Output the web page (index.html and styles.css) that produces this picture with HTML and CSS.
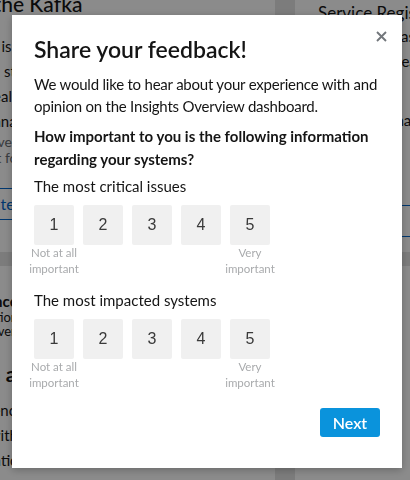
FILE: index.html
```html
<!DOCTYPE html>
<html lang="en">
<head>
<meta charset="utf-8">
<title>Share your feedback</title>
<link rel="stylesheet" href="styles.css">
</head>
<body>
<div class="page">
  <div class="card">
    <div class="ctitle">Try the Kafka</div>
    <div class="cline">Kafka is the fastest way to start</div>
    <div class="cline">Go on streaming data in</div>
    <div class="cline">Get real time for your apps</div>
    <div class="cline">All managed by Red Hat</div>
    <div class="cmuted">Observer ready</div>
    <div class="cmuted">Start it for free today</div>
    <div class="cbtn">Create instance</div>
  </div>
  <div class="card">
    <div class="rtitle">Service Registry</div>
    <div class="cline r">Share schemas with users</div>
    <div class="cline r">and service teams</div>
    <div class="cline r gapr">Reuse schemas</div>
    <div class="cline r">Shared info</div>
    <div class="cline r">Use data</div>
    <div class="cbtn">Learn more</div>
  </div>
  <div class="card c2">
    <div class="bold">Advanced Insights</div>
    <div class="small">Operations and</div>
    <div class="small">Data overview</div>
    <div class="ctitle2">Plan ahead</div>
    <div class="cline">Efficiency</div>
    <div class="cline">Box with</div>
    <div class="cline">Operations</div>
  </div>
  <div class="card c2"></div>
</div>

<div class="backdrop"></div>

<div class="modal" role="dialog" aria-labelledby="mtitle">
  <button class="close" aria-label="Close">
    <svg width="11" height="11" viewBox="0 0 11 11"><path d="M1 1 L10 10 M10 1 L1 10" stroke="#72767b" stroke-width="1.9" fill="none"/></svg>
  </button>
  <h1 class="mtitle" id="mtitle">Share your feedback!</h1>
  <p class="intro">We would like to hear about your experience with and opinion on the Insights Overview dashboard.</p>
  <p class="question">How important to you is the following information regarding your systems?</p>

  <div class="group">
    <div class="glabel">The most critical issues</div>
    <div class="scale">
      <div class="item"><div class="box">1</div><div class="hint">Not at all important</div></div>
      <div class="item"><div class="box">2</div></div>
      <div class="item"><div class="box">3</div></div>
      <div class="item"><div class="box">4</div></div>
      <div class="item"><div class="box">5</div><div class="hint">Very important</div></div>
    </div>
  </div>

  <div class="group second">
    <div class="glabel">The most impacted systems</div>
    <div class="scale">
      <div class="item"><div class="box">1</div><div class="hint">Not at all important</div></div>
      <div class="item"><div class="box">2</div></div>
      <div class="item"><div class="box">3</div></div>
      <div class="item"><div class="box">4</div></div>
      <div class="item"><div class="box">5</div><div class="hint">Very important</div></div>
    </div>
  </div>

  <div class="footer">
    <button class="next">Next</button>
  </div>
</div>
</body>
</html>
```

FILE: styles.css
```css
html, body {
  margin: 0;
  padding: 0;
  height: 100%;
  overflow: hidden;
  background: #e4e4e4;
  font-family: Lato, "Open Sans", sans-serif;
}

/* underlying dashboard */
.page {
  display: grid;
  grid-template-columns: 323px 320px;
  grid-template-rows: 262px 260px;
  column-gap: 20px;
  row-gap: 14px;
  margin-left: -48px;
  margin-top: -10px;
}
.card {
  background: #fff;
  padding: 0 0 0 8px;
  color: #151515;
  white-space: nowrap;
  overflow: hidden;
}
.ctitle {
  font-size: 21px;
  font-weight: 500;
  line-height: 28px;
  margin-bottom: 16px;
}
.cline {
  font-size: 15px;
  line-height: 25px;
}
.cline.r {
  padding-left: 15px;
}
.gapr { margin-top: 34px; }
.cmuted {
  font-size: 14px;
  line-height: 16px;
  color: #6a6e73;
}
.cmuted:first-of-type { margin-top: 20px; }
.cbtn {
  margin-top: 22px;
  border-top: 1.5px solid #06c;
  border-bottom: 1.5px solid #06c;
  color: #06c;
  font-size: 16px;
  line-height: 30px;
  padding-left: 8px;
}
.rtitle {
  font-size: 17px;
  line-height: 22px;
  margin-top: 12px;
  padding-left: 15px;
}
.c2 { padding-top: 26px; }
.bold { font-weight: 700; font-size: 15px; line-height: 18px; }
.small { font-size: 13px; line-height: 14px; }
.ctitle2 { font-size: 21px; font-weight: 700; line-height: 28px; margin: 22px 0 10px; }

.backdrop {
  position: fixed;
  inset: 0;
  background: rgba(0, 0, 0, 0.455);
}

/* modal */
.modal {
  position: fixed;
  left: 12px;
  top: 15px;
  width: 390px;
  height: 453px;
  box-sizing: border-box;
  padding: 20px 22px 0 22px;
  background: #fff;
  box-shadow: 0 2px 8px rgba(0, 0, 0, 0.25);
  color: #151515;
  display: flex;
  flex-direction: column;
}
.close {
  position: absolute;
  top: 16px;
  right: 15px;
  width: 11px;
  height: 11px;
  padding: 0;
  border: 0;
  background: none;
  display: flex;
}
.mtitle {
  margin: 0;
  font-size: 23px;
  font-weight: 600;
  line-height: 28px;
}
.intro {
  margin: 10px 0 0;
  font-size: 15px;
  line-height: 22px;
  letter-spacing: -0.22px;
}
.question {
  margin: 8px 0 0;
  font-size: 15px;
  font-weight: 700;
  line-height: 23px;
}
.group { margin-top: 4px; }
.group.second { margin-top: 12px; }
.glabel {
  font-size: 15px;
  line-height: 22px;
}
.scale {
  margin-top: 8px;
  display: flex;
  gap: 9px;
}
.item {
  width: 40px;
  display: flex;
  flex-direction: column;
  align-items: center;
  min-height: 72px;
}
.box {
  width: 40px;
  height: 40px;
  border-radius: 2px;
  background: #f0f0f0;
  display: flex;
  align-items: center;
  justify-content: center;
  font-family: "Liberation Sans", Arial, sans-serif;
  font-size: 16px;
  color: #3a3a3a;
}
.hint {
  width: 54px;
  flex: none;
  text-align: center;
  font-size: 11.5px;
  line-height: 16px;
  color: #a9abad;
}
.footer {
  margin-top: 17px;
  display: flex;
  justify-content: flex-end;
}
.next {
  width: 60px;
  height: 29px;
  border: 0;
  border-radius: 3px;
  background: #0a93dc;
  color: #fff;
  font-family: Lato, "Open Sans", sans-serif;
  font-size: 16px;
  font-weight: 600;
  padding: 0;
}
```
